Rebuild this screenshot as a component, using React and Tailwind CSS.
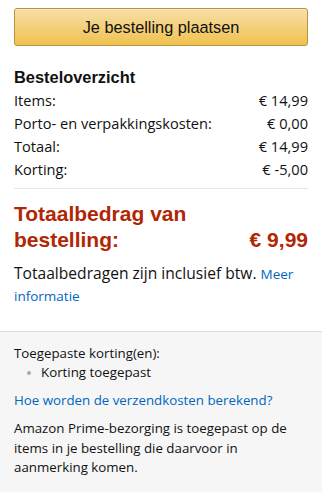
import React from 'react';

const SANS = { fontFamily: '"Open Sans", "Noto Sans", sans-serif' };

const rows = [
    { label: 'Items:', value: '€ 14,99' },
    { label: 'Porto- en verpakkingskosten:', value: '€ 0,00' },
    { label: 'Totaal:', value: '€ 14,99' },
    { label: 'Korting:', value: '€ -5,00' },
];

const App = () => {
    return (
        <div className="w-[322px] min-h-[492px] bg-white text-[#111] flex flex-col" style={SANS}>
            <div className="px-[14px] pt-[8px]">
                <button className="w-full h-[38px] rounded-[3px] border border-[#b5933f] bg-gradient-to-b from-[#f7dfa5] to-[#f0c14b] text-[16.3px] text-[#111] font-['Liberation_Sans',Arial,sans-serif] shadow-[inset_0_1px_0_rgba(255,255,255,0.4)]">
                    Je bestelling plaatsen
                </button>
            </div>

            <div className="px-[14px] pt-[20px]">
                <h2 className="text-[16.4px] leading-[22px] font-bold font-['Liberation_Sans',Arial,sans-serif]">Besteloverzicht</h2>
                <div className="mt-[1px]">
                    {rows.map((row) => (
                        <div key={row.label} className="flex justify-between text-[14.6px] leading-[23px]">
                            <span>{row.label}</span>
                            <span>{row.value}</span>
                        </div>
                    ))}
                </div>
                <div className="h-px bg-[#e7e7e7] mt-[7px]"></div>

                <div className="flex justify-between items-end mt-[12px] text-[#b12704] font-bold font-['Liberation_Sans',Arial,sans-serif] text-[21px] leading-[26px]">
                    <span>Totaalbedrag van<br />bestelling:</span>
                    <span>€ 9,99</span>
                </div>

                <p className="mt-[10px] text-[15.6px] leading-[21px]">
                    Totaalbedragen zijn inclusief btw.{' '}
                    <a href="#" className="text-[#0066c0] text-[13.5px]">Meer informatie</a>
                </p>
            </div>

            <div className="mt-[24px] flex-1 bg-[#f6f6f6] border-t border-[#dddddd] px-[14px] pt-[12px] pb-[16px] text-[13.3px] leading-[19px]">
                <div>Toegepaste korting(en):</div>
                <ul className="pl-[13px]">
                    <li className="flex items-center gap-[10px]">
                        <span className="w-[4px] h-[4px] rounded-full bg-[#aaa]"></span>
                        <span>Korting toegepast</span>
                    </li>
                </ul>
                <a href="#" className="block mt-[9px] text-[#0066c0]">Hoe worden de verzendkosten berekend?</a>
                <p className="mt-[9px] leading-[19.5px]">
                    Amazon Prime-bezorging is toegepast op de items in je bestelling die daarvoor in aanmerking komen.
                </p>
            </div>
        </div>
    );
};

export default App;
